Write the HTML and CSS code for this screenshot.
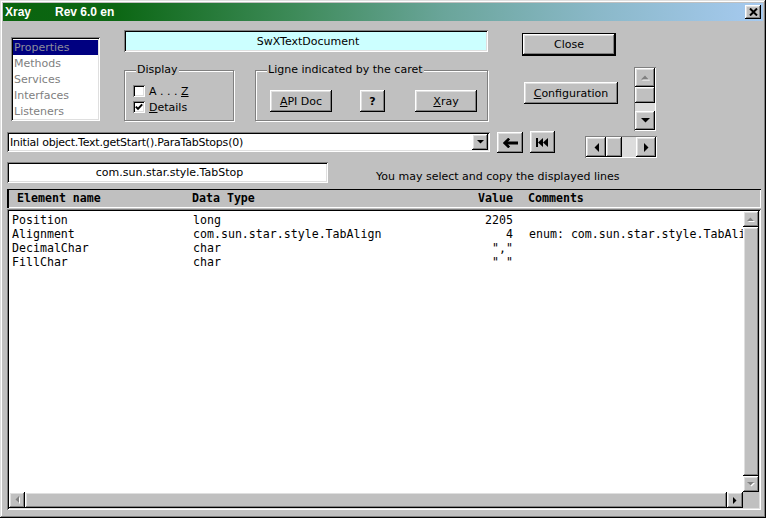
FILE: index.html
```html
<!DOCTYPE html>
<html>
<head>
<meta charset="utf-8">
<title>Xray</title>
<link rel="stylesheet" href="styles.css">
</head>
<body>
<div class="window">
  <div class="titlebar">
    <span class="t-app">Xray</span><span class="t-rev">Rev 6.0 en</span>
    <div class="t-close raised">
      <svg width="9" height="8" viewBox="0 0 9 8"><path d="M1 0.5L8 7.5M8 0.5L1 7.5" stroke="#000" stroke-width="2" fill="none"/></svg>
    </div>
  </div>

  <div class="row-a">
    <div class="list sunken">
      <div class="item sel">Properties</div>
      <div class="item">Methods</div>
      <div class="item">Services</div>
      <div class="item">Interfaces</div>
      <div class="item">Listeners</div>
    </div>

    <div class="mid">
      <div class="cyan sunken">SwXTextDocument</div>
      <div class="groups">
        <div class="group display">
          <span class="glabel">Display</span>
          <div class="chk"><span class="box sunken"></span><span>A . . . <u>Z</u></span></div>
          <div class="chk"><span class="box sunken"><svg width="8" height="8" viewBox="0 0 8 8"><path d="M0.8 3.6L3 5.9L7.2 1.4" stroke="#000" stroke-width="2" fill="none"/></svg></span><span><u>D</u>etails</span></div>
        </div>
        <div class="group ligne">
          <span class="glabel">Ligne indicated by the caret</span>
          <div class="btn raised b-api"><u>A</u>PI Doc</div>
          <div class="btn raised b-q">?</div>
          <div class="btn raised b-xray"><u>X</u>ray</div>
        </div>
      </div>
    </div>

    <div class="right">
      <div class="btn close"><div class="btn-in raised">Close</div></div>
      <div class="cfgrow">
        <div class="btn raised cfg"><u>C</u>onfiguration</div>
        <div class="vsmall">
          <div class="sb-btn raised sv-up">
            <svg width="9" height="6" viewBox="0 0 9 6"><path d="M1 5.5H9L5 1.5Z" fill="#fff"/><path d="M0 4.5H8L4 0.5Z" fill="#808080"/></svg>
          </div>
          <div class="sb-thumb raised sv-thumb"></div>
          <div class="sb-track sv-track"></div>
          <div class="sb-btn raised sv-down">
            <svg width="9" height="5" viewBox="0 0 9 5"><path d="M0 0H9L4.5 4.5Z" fill="#000"/></svg>
          </div>
        </div>
      </div>
    </div>
  </div>

  <div class="row-b">
    <div class="combo sunken">
      <span class="combo-text">Initial object.Text.getStart().ParaTabStops(0)</span>
      <div class="combo-btn raised">
        <svg width="7" height="4" viewBox="0 0 7 4"><path d="M0 0H7L3.5 3.5Z" fill="#000"/></svg>
      </div>
    </div>
    <div class="btn raised b-back">
      <svg width="15" height="10" viewBox="0 0 15 10"><path d="M2 3.5H15V6.5H2Z" fill="#000"/><path d="M6.2 0.6L1.6 5L6.2 9.4" stroke="#000" stroke-width="2.6" fill="none"/></svg>
    </div>
    <div class="btn raised b-first">
      <svg width="13" height="9" viewBox="0 0 13 9"><path d="M0 0H2V9H0Z" fill="#000"/><path d="M2 4.5L7 0V9Z" fill="#000"/><path d="M7 4.5L12 0V9Z" fill="#000"/></svg>
    </div>
    <div class="hsmall">
      <div class="sb-btn raised sh-left">
        <svg width="5" height="9" viewBox="0 0 5 9"><path d="M5 0V9L0.5 4.5Z" fill="#000"/></svg>
      </div>
      <div class="sb-thumb raised sh-thumb"></div>
      <div class="sb-track sh-track"></div>
      <div class="sb-btn raised sh-right">
        <svg width="5" height="9" viewBox="0 0 5 9"><path d="M0 0V9L4.5 4.5Z" fill="#000"/></svg>
      </div>
    </div>
  </div>

  <div class="row-c">
    <div class="typefield sunken">com.sun.star.style.TabStop</div>
    <div class="hint">You may select and copy the displayed lines</div>
  </div>

  <div class="thead">
    <span class="h1">Element name</span><span class="h2">Data Type</span><span class="h3">Value</span><span class="h4">Comments</span>
  </div>

  <div class="tbl sunken">
    <div class="tbl-body">
      <div class="row"><span class="c1">Position</span><span class="c2">long</span><span class="c3">2205</span><span class="c4"></span></div>
      <div class="row"><span class="c1">Alignment</span><span class="c2">com.sun.star.style.TabAlign</span><span class="c3">4</span><span class="c4">enum: com.sun.star.style.TabAlign</span></div>
      <div class="row"><span class="c1">DecimalChar</span><span class="c2">char</span><span class="c3">&quot;,&quot;</span><span class="c4"></span></div>
      <div class="row"><span class="c1">FillChar</span><span class="c2">char</span><span class="c3">&quot; &quot;</span><span class="c4"></span></div>
    </div>
    <div class="vbar">
      <div class="sb-btn raised tb-btn">
        <svg width="8" height="5" viewBox="0 0 8 5"><path d="M1 5H8L4.5 1.5Z" fill="#fff"/><path d="M0 4H7L3.5 0.5Z" fill="#808080"/></svg>
      </div>
      <div class="sb-thumb raised tb-thumb"></div>
      <div class="sb-btn raised tb-btn">
        <svg width="8" height="5" viewBox="0 0 8 5"><path d="M1 1H8L4.5 4.5Z" fill="#fff"/><path d="M0 0H7L3.5 3.5Z" fill="#808080"/></svg>
      </div>
    </div>
    <div class="hbar">
      <div class="sb-btn raised tb-btn">
        <svg width="5" height="8" viewBox="0 0 5 8"><path d="M5 1V8L1.5 4.5Z" fill="#fff"/><path d="M4 0V7L0.5 3.5Z" fill="#808080"/></svg>
      </div>
      <div class="sb-thumb raised tb-thumb"></div>
      <div class="sb-btn raised tb-btn">
        <svg width="4" height="7" viewBox="0 0 4 7"><path d="M0 0V7L3.5 3.5Z" fill="#000"/></svg>
      </div>
    </div>
    <div class="corner"></div>
  </div>
</div>
</body>
</html>
```

FILE: styles.css
```css
* { box-sizing: border-box; }

body {
  margin: 0;
  background: #c0c0c0;
  font-family: "DejaVu Sans", "Noto Sans", sans-serif;
  font-size: 11px;
  color: #000;
}

.window {
  width: 766px;
  height: 518px;
  padding: 3px;
  background: #c0c0c0;
  overflow: hidden;
  box-shadow: inset -1px -1px #000, inset 1px 1px #dfdfdf, inset -2px -2px #808080, inset 2px 2px #fff;
}

.raised {
  background: #c0c0c0;
  box-shadow: inset -1px -1px #000, inset 1px 1px #fff, inset -2px -2px #808080, inset 2px 2px #dfdfdf;
}

.sunken {
  box-shadow: inset 1px 1px #808080, inset -1px -1px #fff, inset 2px 2px #000, inset -2px -2px #dfdfdf;
}

/* title bar */
.titlebar {
  height: 18px;
  display: flex;
  align-items: center;
  background: linear-gradient(90deg, #0a640e 0%, #0c6714 15%, #3d8a58 38%, #6aa59a 58%, #8ab8c8 78%, #a6caf0 100%);
  color: #fff;
  font: bold 12px "Liberation Sans", Arial, sans-serif;
}
.t-app { margin-left: 2px; width: 50px; }
.t-close {
  margin-left: auto;
  margin-right: 2px;
  width: 16px;
  height: 14px;
  display: flex;
  align-items: center;
  justify-content: center;
}

/* row A */
.row-a {
  display: flex;
  align-items: flex-start;
  margin-top: 9px;
}

.list {
  margin: 7px 0 0 8px;
  width: 89px;
  height: 84px;
  background: #fff;
  padding: 3px 2px 0 2px;
  color: #808080;
}
.item {
  height: 16px;
  line-height: 15px;
  padding-left: 1px;
  white-space: nowrap;
}
.item.sel { background: #000080; color: #8c8c9c; height: 15px; margin-bottom: 1px; }

.mid { margin-left: 24px; width: 364px; }
.cyan {
  height: 22px;
  background: #ccffff;
  display: flex;
  align-items: center;
  justify-content: center;
  padding-left: 4px;
}
.groups { display: flex; gap: 21px; margin-top: 18px; }

.group {
  position: relative;
  height: 51px;
  border: 1px solid #808080;
  box-shadow: inset 1px 1px #fff, 1px 1px #fff;
}
.glabel {
  position: absolute;
  top: -8px;
  left: 11px;
  padding: 0 1px;
  line-height: 14px;
  background: #c0c0c0;
  white-space: nowrap;
}

.display { width: 110px; padding: 14px 0 0 8px; }
.chk {
  display: flex;
  align-items: center;
  height: 12px;
  margin-bottom: 4px;
  white-space: nowrap;
}
.box {
  width: 12px;
  height: 12px;
  background: #fff;
  margin-right: 4px;
  display: flex;
  align-items: center;
  justify-content: center;
}

.ligne {
  width: 233px;
  padding: 19px 0 0 14px;
  display: flex;
  align-items: flex-start;
}

.btn {
  display: flex;
  align-items: center;
  justify-content: center;
  white-space: nowrap;
}
.b-api { width: 62px; height: 22px; }
.b-q { width: 25px; height: 22px; margin-left: 28px; font-weight: bold; }
.b-xray { width: 62px; height: 22px; margin-left: 30px; }

.right { margin-left: 34px; }
.close {
  margin-top: 3px;
  width: 94px;
  height: 23px;
  border: 1px solid #000;
}
.btn-in {
  width: 100%;
  height: 100%;
  display: flex;
  align-items: center;
  justify-content: center;
}
.cfgrow { display: flex; align-items: flex-start; }
.cfg { margin: 26px 0 0 2px; width: 94px; height: 22px; }

/* small scrollbars */
.vsmall {
  margin: 11px 0 0 16px;
  width: 22px;
  height: 64px;
  padding: 1px;
  display: flex;
  flex-direction: column;
  box-shadow: inset 1px 1px #808080, inset -1px -1px #fff;
}
.sb-btn {
  display: flex;
  align-items: center;
  justify-content: center;
  flex: none;
}
.sb-track { background: #dcdcdc; }
.sv-up { height: 19px; }
.sv-thumb { height: 16px; }
.sv-track { height: 8px; }
.sv-down { height: 19px; }

.hsmall {
  margin: 4px 0 0 30px;
  width: 72px;
  height: 22px;
  padding: 1px;
  display: flex;
  box-shadow: inset 1px 1px #808080, inset -1px -1px #fff;
}
.sh-left { width: 20px; }
.sh-thumb { width: 16px; }
.sh-track { width: 14px; }
.sh-right { width: 20px; }

/* row B */
.row-b {
  display: flex;
  align-items: flex-start;
  margin-top: 1px;
}
.combo {
  margin-left: 4px;
  width: 483px;
  height: 20px;
  background: #fff;
  display: flex;
  align-items: center;
  padding: 2px;
}
.combo-text {
  flex: 1;
  padding-left: 1px;
  letter-spacing: -0.22px;
  white-space: nowrap;
  overflow: hidden;
}
.combo-btn {
  width: 16px;
  height: 16px;
  display: flex;
  align-items: center;
  justify-content: center;
}
.b-back { margin-left: 7px; width: 26px; height: 21px; }
.b-first { margin-left: 7px; width: 25px; height: 22px; margin-top: -1px; }

/* row C */
.row-c {
  display: flex;
  align-items: flex-start;
  margin-top: 4px;
}
.typefield {
  margin-left: 4px;
  width: 321px;
  height: 21px;
  background: #fff;
  display: flex;
  align-items: center;
  justify-content: center;
  padding-left: 4px;
}
.hint {
  margin: 8px 0 0 48px;
  line-height: 13px;
  white-space: nowrap;
}

/* table */
.thead {
  margin: 6px 0 0 4px;
  width: 754px;
  height: 19px;
  display: flex;
  align-items: center;
  padding: 0 0 1px 10px;
  box-shadow: inset 2px 1px #000, inset -1px -1px #fff;
  font: bold 11.6px "DejaVu Sans Mono", "Liberation Mono", monospace;
  white-space: nowrap;
}
.h1 { width: 175px; flex: none; }
.h2 { width: 251px; flex: none; }
.h3 { width: 70px; flex: none; text-align: right; }
.h4 { margin-left: 15px; }

.tbl {
  margin: 1px 0 0 4px;
  width: 754px;
  height: 301px;
  padding: 2px;
  display: grid;
  grid-template-columns: 1fr 16px;
  grid-template-rows: 1fr 16px;
  background: #c0c0c0;
}
.tbl-body {
  background: #fff;
  overflow: hidden;
  padding: 2px 0 0 3px;
  font: 11.6px "DejaVu Sans Mono", "Liberation Mono", monospace;
}
.row {
  display: flex;
  height: 14px;
  line-height: 14px;
  white-space: nowrap;
}
.c1 { width: 181px; flex: none; }
.c2 { width: 250px; flex: none; }
.c3 { width: 70px; flex: none; text-align: right; white-space: pre; }
.c4 { margin-left: 16px; flex: none; }

.vbar { display: flex; flex-direction: column; }
.vbar .tb-btn { height: 16px; }
.vbar .tb-thumb { flex: 1; }
.hbar { display: flex; }
.hbar .tb-btn { width: 16px; }
.hbar .tb-thumb { flex: 1; }
.corner { background: #c0c0c0; }
```
